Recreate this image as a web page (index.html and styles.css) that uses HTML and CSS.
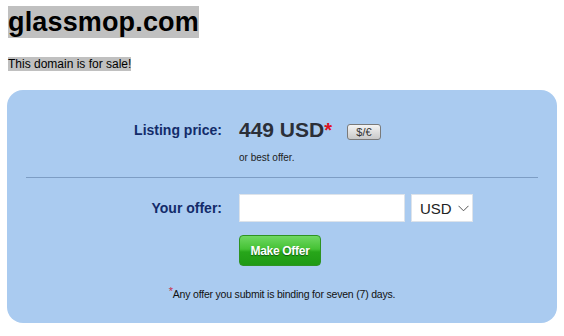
FILE: index.html
```html
<!DOCTYPE html>
<html>
<head>
<meta charset="utf-8">
<link rel="stylesheet" href="styles.css">
</head>
<body>
<div class="head">
  <h1 class="title">glassmop.com</h1>
  <p class="sub">This domain is for sale!</p>
</div>
<div class="box">
  <div class="row price-row">
    <div class="label">Listing price:</div>
    <div class="value">
      <span class="price">449 USD<span class="star">*</span></span>
      <button class="cur-btn">$/€</button>
    </div>
  </div>
  <div class="row note-row">
    <div class="label"></div>
    <div class="value note">or best offer.</div>
  </div>
  <div class="divider"></div>
  <div class="row offer-row">
    <div class="label">Your offer:</div>
    <div class="value">
      <input class="offer-input" type="text">
      <div class="select">USD<svg class="chev" width="11" height="7" viewBox="0 0 11 7"><path d="M0.5 0.8 L5.5 5.8 L10.5 0.8" fill="none" stroke="#555" stroke-width="1"/></svg></div>
    </div>
  </div>
  <div class="row btn-row">
    <div class="label"></div>
    <div class="value"><button class="make-offer">Make Offer</button></div>
  </div>
  <p class="footer"><span class="fstar">*</span>Any offer you submit is binding for seven (7) days.</p>
</div>
</body>
</html>
```
FILE: styles.css
```css
html, body {
  margin: 0;
  padding: 0;
  background: #ffffff;
}
body {
  padding: 6px 7px 0 7px;
  font-family: "Liberation Sans", Arial, sans-serif;
}
.head {
  padding-left: 1px;
}
.title {
  display: inline-block;
  margin: 0;
  font-size: 27px;
  line-height: 32px;
  font-weight: bold;
  color: #000;
  background: #c0c0c0;
  letter-spacing: 0.15px;
}
.sub {
  display: table;
  margin: 19px 0 0 0;
  font-size: 12px;
  line-height: 14px;
  color: #000;
  background: #c0c0c0;
}
.box {
  margin-top: 19px;
  width: 550px;
  height: 233px;
  box-sizing: border-box;
  background: #aacbf0;
  border-radius: 16px;
  padding-top: 28px;
}
.row {
  display: flex;
  align-items: center;
}
.label {
  width: 215px;
  flex: none;
  text-align: right;
  font-size: 14px;
  font-weight: bold;
  color: #132b6a;
}
.value {
  margin-left: 17px;
  display: flex;
  align-items: center;
}
.price-row {
  height: 24px;
  align-items: baseline;
}
.price-row .label {
  position: relative;
  top: -2px;
}
.price-row .value {
  align-items: baseline;
}
.price {
  font-size: 21px;
  line-height: 24px;
  font-weight: bold;
  color: #2b2f38;
}
.star {
  color: #dd1122;
  font-size: 20px;
}
.cur-btn {
  margin-left: 15px;
  width: 34px;
  height: 16px;
  padding: 0;
  font-family: "Liberation Sans", Arial, sans-serif;
  font-size: 11px;
  line-height: 14px;
  color: #333;
  border: 1px solid #7a7a7a;
  border-radius: 3px;
  background: linear-gradient(#f4f4f4, #c9c9c9);
  position: relative;
  top: -1px;
}
.note-row {
  margin-top: 10px;
}
.note {
  font-size: 10px;
  line-height: 12px;
  color: #1c1c1c;
}
.divider {
  margin: 13px 19px 0 19px;
  height: 1px;
  background: #7d9dc4;
}
.offer-row {
  margin-top: 16px;
}
.offer-input {
  width: 166px;
  height: 28px;
  box-sizing: border-box;
  margin: 0;
  border: 1px solid #dde3ea;
  background: #fff;
  padding: 0;
}
.select {
  margin-left: 6px;
  width: 62px;
  height: 28px;
  box-sizing: border-box;
  background: #fff;
  border: 1px solid #dde3ea;
  display: flex;
  align-items: center;
  padding-left: 8px;
  font-size: 15px;
  color: #222;
}
.chev {
  margin-left: 6px;
}
.btn-row {
  margin-top: 13px;
}
.make-offer {
  width: 82px;
  height: 31px;
  padding: 0;
  border: 1px solid #2e9322;
  border-radius: 4px;
  background: linear-gradient(#6fd862 0%, #45c235 45%, #27a61a 55%, #1f9a14 100%);
  color: #fff;
  font-family: "Liberation Sans", Arial, sans-serif;
  font-size: 12px;
  font-weight: bold;
  letter-spacing: -0.3px;
  text-shadow: 0 1px 1px rgba(0,60,0,0.7);
}
.footer {
  margin: 22px 0 0 0;
  text-align: center;
  font-size: 10.5px;
  line-height: 13px;
  color: #111;
  letter-spacing: -0.2px;
}
.fstar {
  color: #c8304a;
  font-size: 11px;
  position: relative;
  top: -3px;
}
```
